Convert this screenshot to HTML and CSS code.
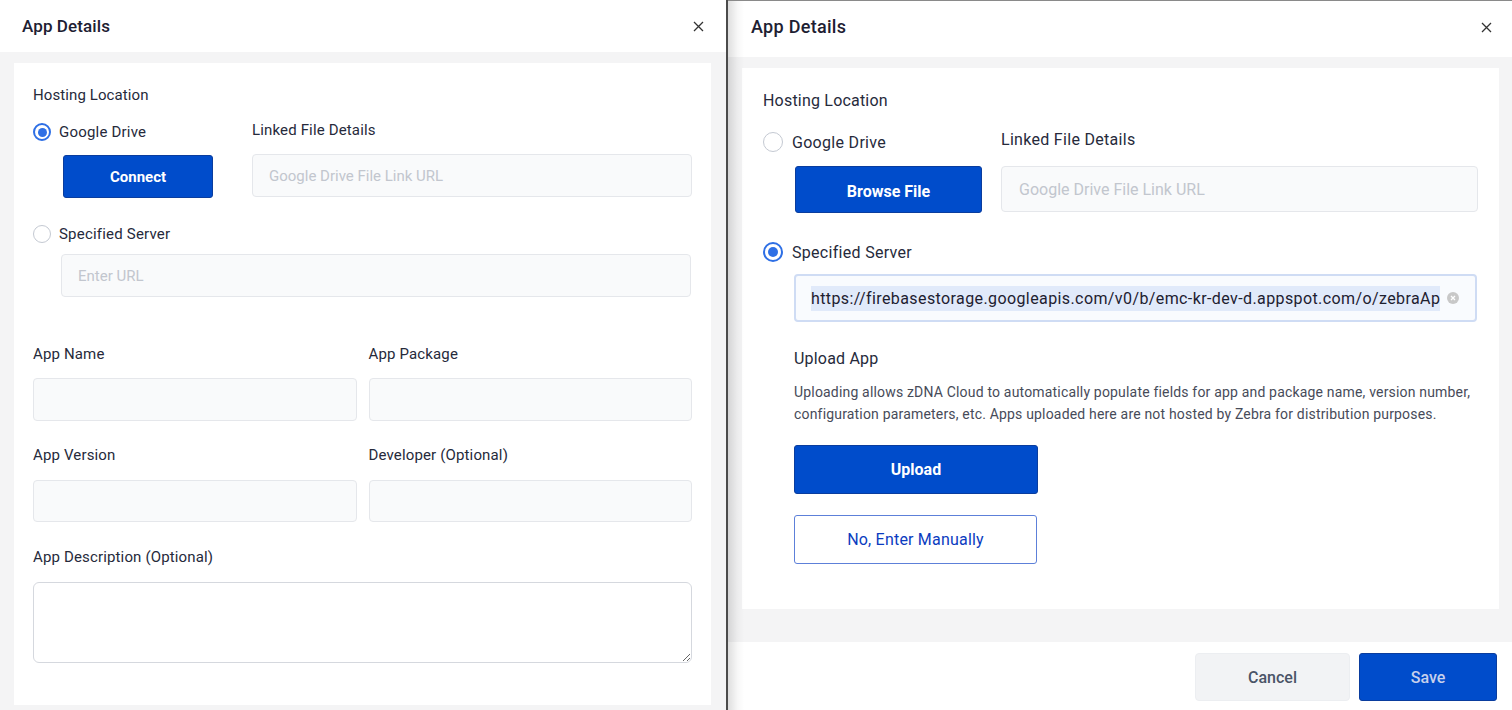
FILE: index.html
```html
<!DOCTYPE html>
<html>
<head>
<meta charset="utf-8">
<title>App Details</title>
<link rel="stylesheet" href="styles.css">
</head>
<body>
<div class="screen">
  <section class="panel pl">
    <header class="head">
      <h2 class="title">App Details</h2>
      <span class="close"><svg width="11" height="11" viewBox="0 0 11 11"><path d="M1 1L10 10M10 1L1 10" stroke="#333" stroke-width="1.3" fill="none"/></svg></span>
    </header>
    <div class="body">
      <div class="card">
        <div class="section-label">Hosting Location</div>
        <div class="host-row">
          <div class="host-left">
            <div class="radio-line"><span class="radio checked"></span>Google Drive</div>
            <button class="btn-primary btn-drive">Connect</button>
          </div>
          <div class="host-right">
            <div class="field-label">Linked File Details</div>
            <div class="input link-input"><span class="ph">Google Drive File Link URL</span></div>
          </div>
        </div>
        <div class="radio-line server-line"><span class="radio"></span>Specified Server</div>
        <div class="input url-input"><span class="ph">Enter URL</span></div>
        <div class="grid2">
          <div class="field">
            <div class="field-label">App Name</div>
            <div class="input grid-input r1"></div>
          </div>
          <div class="field">
            <div class="field-label">App Package</div>
            <div class="input grid-input r1"></div>
          </div>
          <div class="field">
            <div class="field-label">App Version</div>
            <div class="input grid-input r2"></div>
          </div>
          <div class="field">
            <div class="field-label">Developer (Optional)</div>
            <div class="input grid-input r2"></div>
          </div>
        </div>
        <div class="desc-field">
          <div class="field-label">App Description (Optional)</div>
          <textarea class="textarea"></textarea>
        </div>
      </div>
    </div>
  </section>

  <section class="panel pr">
    <header class="head">
      <h2 class="title">App Details</h2>
      <span class="close"><svg width="11" height="11" viewBox="0 0 11 11"><path d="M1 1L10 10M10 1L1 10" stroke="#333" stroke-width="1.3" fill="none"/></svg></span>
    </header>
    <div class="body">
      <div class="card">
        <div class="section-label">Hosting Location</div>
        <div class="host-row">
          <div class="host-left">
            <div class="radio-line"><span class="radio"></span>Google Drive</div>
            <button class="btn-primary btn-drive">Browse File</button>
          </div>
          <div class="host-right">
            <div class="field-label">Linked File Details</div>
            <div class="input link-input"><span class="ph">Google Drive File Link URL</span></div>
          </div>
        </div>
        <div class="radio-line server-line"><span class="radio checked"></span>Specified Server</div>
        <div class="input url-input focused">
          <div class="url-clip"><span class="url-text">https://firebasestorage.googleapis.com/v0/b/emc-kr-dev-d.appspot.com/o/zebraAp</span></div>
          <span class="clear"><svg width="12" height="12" viewBox="0 0 12 12"><circle cx="6" cy="6" r="6" fill="#c8c8c8"/><path d="M4 4L8 8M8 4L4 8" stroke="#fff" stroke-width="1.3"/></svg></span>
        </div>
        <div class="upload">
          <div class="upload-title">Upload App</div>
          <p class="upload-desc">Uploading allows zDNA Cloud to automatically populate fields for app and package name, version number,<br>configuration parameters, etc. Apps uploaded here are not hosted by Zebra for distribution purposes.</p>
          <button class="btn-primary btn-upload">Upload</button>
          <button class="btn-outline">No, Enter Manually</button>
        </div>
      </div>
    </div>
    <footer class="foot">
      <button class="btn-cancel">Cancel</button>
      <button class="btn-save">Save</button>
    </footer>
  </section>
</div>
</body>
</html>
```

FILE: styles.css
```css
* { box-sizing: border-box; }
html, body { margin: 0; padding: 0; }
body {
  width: 1512px;
  height: 710px;
  overflow: hidden;
  font-family: Roboto, "Liberation Sans", Arial, sans-serif;
  color: #262a3b;
  background: #fff;
}
button { font-family: inherit; cursor: pointer; }

.screen { display: flex; width: 1512px; height: 710px; }

.panel { display: flex; flex-direction: column; height: 710px; background: #fff; position: relative; }

.head { display: flex; align-items: center; justify-content: space-between; flex: none; background: #fff; }
.title { margin: 0; font-weight: 500; color: #1d2032; }
.close { display: flex; align-items: center; }

.body { background: #f4f4f5; flex: none; }
.card { background: #fff; }

.section-label, .field-label { color: #262a3b; }

.host-row { display: flex; }
.host-left { flex: none; display: flex; flex-direction: column; align-items: flex-start; }
.host-right { flex: 1; display: flex; flex-direction: column; }

.radio-line { display: flex; align-items: center; color: #262a3b; }
.radio {
  flex: none;
  border-radius: 50%;
  border: 1.5px solid #c4c9d2;
  background: #fff;
  position: relative;
}
.radio.checked { border: 2px solid #2e6fe5; }
.radio.checked::after {
  content: "";
  position: absolute;
  inset: 3px;
  border-radius: 50%;
  background: #2e6fe5;
}

.input {
  background: #f9fafb;
  border: 1px solid #e5e7eb;
  border-radius: 4px;
  display: flex;
  align-items: center;
}
.ph { color: #c2c6ce; }

.btn-primary {
  background: #004ccb;
  border: 1px solid #0a3d9e;
  border-radius: 3px;
  color: #fff;
  font-weight: 700;
  padding: 0;
}

/* ---------- left panel ---------- */
.pl { width: 728px; border-right: 2px solid #4b4b4b; }
.pl .head { height: 52px; padding: 0 22px 0 22px; }
.pl .title { font-size: 17px; line-height: 20px; letter-spacing: 0.1px; }
.pl .body { padding: 11px 15px 5px 14px; height: 658px; }
.pl .card { padding: 22px 19px 41px 19px; height: 642px; }
.pl .section-label { font-size: 15px; line-height: 20px; letter-spacing: 0.1px; }
.pl .host-row { margin-top: 15px; }
.pl .host-left { width: 219px; }
.pl .radio-line { height: 20px; font-size: 15px; letter-spacing: 0.2px; }
.pl .host-left .radio-line { margin-top: 2px; }
.pl .radio { width: 18px; height: 18px; margin-right: 8px; }
.pl .radio.checked::after { inset: 2.5px; }
.pl .btn-drive { margin: 13px 0 0 30px; width: 150px; height: 43px; font-size: 15px; }
.pl .field-label { font-size: 15px; line-height: 20px; letter-spacing: 0.15px; }
.pl .link-input { margin-top: 14px; height: 43px; }
.pl .input { padding-left: 16px; font-size: 15px; }
.pl .server-line { margin-top: 26px; }
.pl .url-input { margin: 10px 1px 0 28px; height: 43px; }
.pl .grid2 { margin-top: 47px; display: grid; grid-template-columns: 1fr 1fr; column-gap: 12px; row-gap: 24px; }
.pl .grid-input.r1 { margin-top: 14px; height: 43px; }
.pl .grid-input.r2 { margin-top: 15px; height: 42px; }
.pl .desc-field { margin-top: 25px; }
.pl .textarea {
  display: block;
  width: 100%;
  margin-top: 15px;
  height: 81px;
  border: 1px solid #d5d8de;
  border-radius: 6px;
  background: #fff;
  resize: vertical;
  font-family: inherit;
  outline: none;
}

/* ---------- right panel ---------- */
.pr { width: 784px; border-top: 1px solid #8a8a8a; }
.pr::before {
  content: "";
  position: absolute;
  left: 0; top: 0; bottom: 0;
  width: 16px;
  background: linear-gradient(to right, rgba(0,0,0,0.13), rgba(0,0,0,0.03) 60%, rgba(0,0,0,0));
  pointer-events: none;
  z-index: 2;
}
.pr .head { height: 56px; padding: 0 20px 4px 23px; }
.pr .title { font-size: 18px; line-height: 22px; letter-spacing: 0.3px; }
.pr .body { padding: 11px 13px 33px 14px; height: 585px; }
.pr .card { padding: 22px 21px 45px 21px; height: 541px; }
.pr .section-label { font-size: 16px; line-height: 22px; letter-spacing: 0.2px; }
.pr .host-row { margin-top: 17px; }
.pr .host-left { width: 238px; }
.pr .radio-line { height: 22px; font-size: 16px; letter-spacing: 0.3px; }
.pr .host-left .radio-line { margin-top: 2px; }
.pr .radio { width: 20px; height: 20px; margin-right: 9px; }
.pr .btn-drive { margin: 13px 0 0 32px; width: 187px; height: 47px; font-size: 16px; padding-top: 3px; }
.pr .field-label { font-size: 16px; line-height: 22px; letter-spacing: 0.3px; }
.pr .link-input { margin-top: 15px; height: 46px; padding-left: 17px; font-size: 16px; }
.pr .server-line { margin-top: 28px; }
.pr .url-input {
  margin: 11px 1px 0 31px;
  height: 48px;
  position: relative;
  padding: 0 34px 0 15px;
}
.pr .url-input.focused { border: 2px solid #cfdcf4; background: #f9fbfe; }
.url-clip { overflow: hidden; white-space: nowrap; flex: 1; }
.url-text { font-size: 16px; line-height: 25px; color: #1d2030; background: #e1eafa; display: inline-block; letter-spacing: 0.4px; }
.clear { position: absolute; right: 16px; top: 50%; margin-top: -6px; width: 12px; height: 12px; display: block; }
.clear svg { display: block; }

.upload { margin-left: 31px; }
.upload-title { margin-top: 26px; font-size: 16px; line-height: 22px; letter-spacing: 0.2px; color: #262a3b; }
.upload-desc { margin: 11px 0 0 0; font-size: 14px; line-height: 22px; color: #474b59; white-space: nowrap; letter-spacing: 0.18px; }
.btn-upload { display: block; margin-top: 20px; width: 244px; height: 49px; font-size: 16px; }
.btn-outline {
  display: block;
  margin-top: 21px;
  width: 243px;
  height: 49px;
  background: #fff;
  border: 1px solid #5d80d9;
  border-radius: 3px;
  color: #0b3cc0;
  font-size: 16px;
  font-weight: 400;
  letter-spacing: 0.2px;
  padding: 0;
}

.foot { height: 68px; display: flex; justify-content: flex-end; align-items: flex-start; padding: 11px 15px 0 0; gap: 9px; background: #fff; }
.btn-cancel {
  width: 155px; height: 48px;
  background: #f2f3f5;
  border: 1px solid #eceef1;
  border-radius: 4px;
  color: #4a5467;
  font-size: 16px;
  font-weight: 500;
  padding-top: 2px;
}
.btn-save {
  width: 138px; height: 48px;
  background: #004ccb;
  border: 1px solid #0a3d9e;
  border-radius: 3px;
  color: #c6d0ec;
  font-size: 16px;
  font-weight: 500;
  padding-top: 2px;
}
```
